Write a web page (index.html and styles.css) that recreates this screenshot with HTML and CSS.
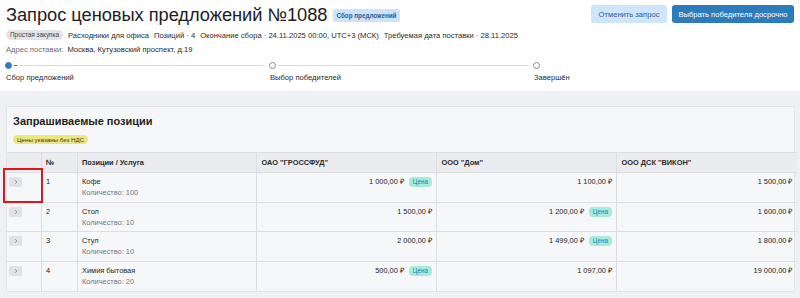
FILE: index.html
```html
<!DOCTYPE html>
<html lang="ru">
<head>
<meta charset="utf-8">
<link rel="stylesheet" href="styles.css">
</head>
<body>
<header class="head">
  <div class="top">
    <div class="title-wrap">
      <h1 class="title">Запрос ценовых предложений №1088</h1>
      <span class="status">Сбор предложений</span>
    </div>
    <div class="actions">
      <button class="btn btn-light">Отменить запрос</button>
      <button class="btn btn-primary">Выбрать победителя досрочно</button>
    </div>
  </div>
  <div class="meta">
    <span class="chip-gray">Простая закупка</span>
    <span>Расходники для офиса</span>
    <span>Позиций · 4</span>
    <span>Окончание сбора · 24.11.2025 00:00, UTC+3 (МСК)</span>
    <span>Требуемая дата поставки · 28.11.2025</span>
  </div>
  <div class="addr"><span class="muted">Адрес поставки:</span> <span>Москва, Кутузовский проспект, д.19</span></div>
  <div class="steps">
    <div class="step">
      <div class="track"><span class="dot active"></span><span class="line"><span class="progress"></span></span></div>
      <div class="label">Сбор предложений</div>
    </div>
    <div class="step">
      <div class="track"><span class="dot"></span><span class="line"></span></div>
      <div class="label">Выбор победителей</div>
    </div>
    <div class="step">
      <div class="track"><span class="dot"></span></div>
      <div class="label">Завершён</div>
    </div>
  </div>
</header>

<section class="card">
  <h2 class="card-title">Запрашиваемые позиции</h2>
  <span class="chip-yellow">Цены указаны без НДС</span>
  <table class="grid">
    <colgroup>
      <col class="c-exp"><col class="c-num"><col class="c-name"><col class="c-sup"><col class="c-sup"><col class="c-sup">
    </colgroup>
    <thead>
      <tr><th></th><th>№</th><th>Позиции / Услуга</th><th>ОАО "ГРОССФУД"</th><th>ООО "Дом"</th><th>ООО ДСК "ВИКОН"</th></tr>
    </thead>
    <tbody>
      <tr>
        <td class="exp-cell"><span class="exp"><svg viewBox="0 0 10 10" width="6" height="6"><path d="M3.5 2 L6.5 5 L3.5 8" fill="none" stroke="#666" stroke-width="1.1"/></svg></span><span class="mark"></span></td>
        <td>1</td>
        <td><div class="name">Кофе</div><div class="qty">Количество: 100</div></td>
        <td class="price">1 000,00 ₽<span class="chip-teal">Цена</span></td>
        <td class="price">1 100,00 ₽</td>
        <td class="price">1 500,00 ₽</td>
      </tr>
      <tr>
        <td class="exp-cell"><span class="exp"><svg viewBox="0 0 10 10" width="6" height="6"><path d="M3.5 2 L6.5 5 L3.5 8" fill="none" stroke="#666" stroke-width="1.1"/></svg></span></td>
        <td>2</td>
        <td><div class="name">Стол</div><div class="qty">Количество: 10</div></td>
        <td class="price">1 500,00 ₽</td>
        <td class="price">1 200,00 ₽<span class="chip-teal">Цена</span></td>
        <td class="price">1 600,00 ₽</td>
      </tr>
      <tr>
        <td class="exp-cell"><span class="exp"><svg viewBox="0 0 10 10" width="6" height="6"><path d="M3.5 2 L6.5 5 L3.5 8" fill="none" stroke="#666" stroke-width="1.1"/></svg></span></td>
        <td>3</td>
        <td><div class="name">Стул</div><div class="qty">Количество: 10</div></td>
        <td class="price">2 000,00 ₽</td>
        <td class="price">1 499,00 ₽<span class="chip-teal">Цена</span></td>
        <td class="price">1 800,00 ₽</td>
      </tr>
      <tr>
        <td class="exp-cell"><span class="exp"><svg viewBox="0 0 10 10" width="6" height="6"><path d="M3.5 2 L6.5 5 L3.5 8" fill="none" stroke="#666" stroke-width="1.1"/></svg></span></td>
        <td>4</td>
        <td><div class="name">Химия бытовая</div><div class="qty">Количество: 20</div></td>
        <td class="price">500,00 ₽<span class="chip-teal">Цена</span></td>
        <td class="price">1 097,00 ₽</td>
        <td class="price">19 000,00 ₽</td>
      </tr>
    </tbody>
  </table>
</section>
</body>
</html>
```

FILE: styles.css
```css
* { box-sizing: border-box; }
html, body { margin: 0; padding: 0; }
body {
  background: #eef0f3;
  font-family: "Liberation Sans", Arial, sans-serif;
  color: #222;
  width: 800px;
  height: 298px;
  overflow: hidden;
}

.head {
  background: #fff;
  height: 91px;
  padding: 5px 6px 0 6px;
}
.top {
  display: flex;
  justify-content: space-between;
  align-items: flex-start;
  height: 20px;
}
.title-wrap { display: flex; align-items: center; gap: 6px; }
.title {
  margin: 0;
  font-size: 18.3px;
  font-weight: 400;
  line-height: 20px;
  color: #1d1d1f;
  letter-spacing: -0.05px;
}
.status {
  background: #cfe3f8;
  color: #1f5e9b;
  font-size: 6.3px;
  font-weight: 700;
  padding: 2px 3px;
  border-radius: 2px;
  line-height: 9px;
  margin-top: 1px;
}
.actions { display: flex; gap: 5px; }
.btn {
  font-family: inherit;
  font-size: 7.6px;
  height: 18px;
  border: none;
  border-radius: 3px;
  padding: 0 8px;
  white-space: nowrap;
  cursor: pointer;
}
.btn-light { background: #cfe5fb; color: #2e5e8e; width: 76px; padding: 0; }
.btn-primary { background: #2c7bbb; color: #fff; width: 122px; padding: 0; }

.meta {
  display: flex;
  align-items: center;
  gap: 5px;
  font-size: 7.6px;
  margin-top: 5px;
  height: 10px;
  color: #2a2a2a;
}
.chip-gray {
  background: #e3e4e8;
  color: #444;
  font-size: 6.4px;
  padding: 0 4px;
  border-radius: 5px;
  line-height: 10px;
  height: 10px;
}
.addr {
  font-size: 7.6px;
  margin-top: 5px;
  color: #2a2a2a;
  line-height: 10px;
}
.muted { color: #6b6e74; margin-right: 2px; }

.steps {
  display: grid;
  grid-template-columns: 264px 264px 264px;
  margin-top: 7px;
  margin-left: -1px;
}
.track {
  display: flex;
  align-items: center;
  height: 7px;
}
.dot {
  width: 7px;
  height: 7px;
  border-radius: 50%;
  border: 1px solid #8a8d93;
  background: #fff;
  flex: none;
}
.dot.active { background: #2b7cc4; border-color: #2b7cc4; }
.line {
  flex: 1;
  height: 1.5px;
  background: #dadce0;
  margin: 0 4px 0 2px;
  position: relative;
}
.progress {
  position: absolute;
  left: 0;
  top: 0;
  width: 3px;
  height: 100%;
  background: #2b7cc4;
}
.label {
  font-size: 7.6px;
  color: #2a2a2a;
  margin-top: 4px;
  margin-left: 1px;
  line-height: 10px;
}

.card {
  margin: 15px 5px 0 6px;
  background: #f6f7f9;
  border: 1px solid #e3e5e9;
  border-radius: 2px;
  height: 186px;
}
.card-title {
  margin: 0;
  padding: 8px 0 0 6px;
  font-size: 11px;
  font-weight: 700;
  line-height: 13px;
  color: #1e1e20;
}
.chip-yellow {
  display: inline-block;
  margin: 7px 0 0 6px;
  background: #ece67e;
  color: #3d3b1c;
  font-size: 6.2px;
  line-height: 9px;
  padding: 0 4px;
  border-radius: 5px;
  vertical-align: top;
}

.grid {
  width: 100%;
  border-collapse: collapse;
  margin-top: 6px;
  table-layout: fixed;
  font-size: 7.4px;
}
.c-exp { width: 34px; }
.c-num { width: 36px; }
.c-name { width: 179.5px; }
.c-sup { width: 180px; }
.grid th {
  background: #ebecef;
  text-align: left;
  font-weight: 700;
  color: #2a2a2c;
  height: 20px;
  padding: 0 4.5px;
  border-left: 1px solid #dcdee2;
  border-top: 1px solid #dcdee2;
  border-bottom: 1px solid #dcdee2;
}
.grid th:first-child, .grid td:first-child { border-left: none; }
.grid td {
  height: 29.6px;
  vertical-align: top;
  padding: 3px 4.5px 0;
  border-left: 1px solid #dcdee2;
  border-bottom: 1px solid #dcdee2;
  color: #222;
  line-height: 11px;
}
.grid tbody tr:last-child td { border-bottom: none; }
.name { color: #1f1f21; }
.qty { color: #74777c; }
.price { text-align: right; padding-right: 4px !important; }
.chip-teal {
  display: inline-block;
  background: #a6ebdc;
  color: #2b7bb7;
  font-size: 6.3px;
  line-height: 10px;
  padding: 0 4px;
  border-radius: 4px;
  margin-left: 5px;
  vertical-align: 0;
}
.exp-cell { position: relative; padding: 4px 0 0 2px !important; }
.exp {
  display: inline-flex;
  align-items: center;
  justify-content: center;
  width: 13px;
  height: 10px;
  background: #e1e2e6;
  border-radius: 2px;
}
.mark {
  position: absolute;
  left: -4px;
  top: -5px;
  width: 40px;
  height: 35px;
  border: 2px solid #e0141c;
}
```
